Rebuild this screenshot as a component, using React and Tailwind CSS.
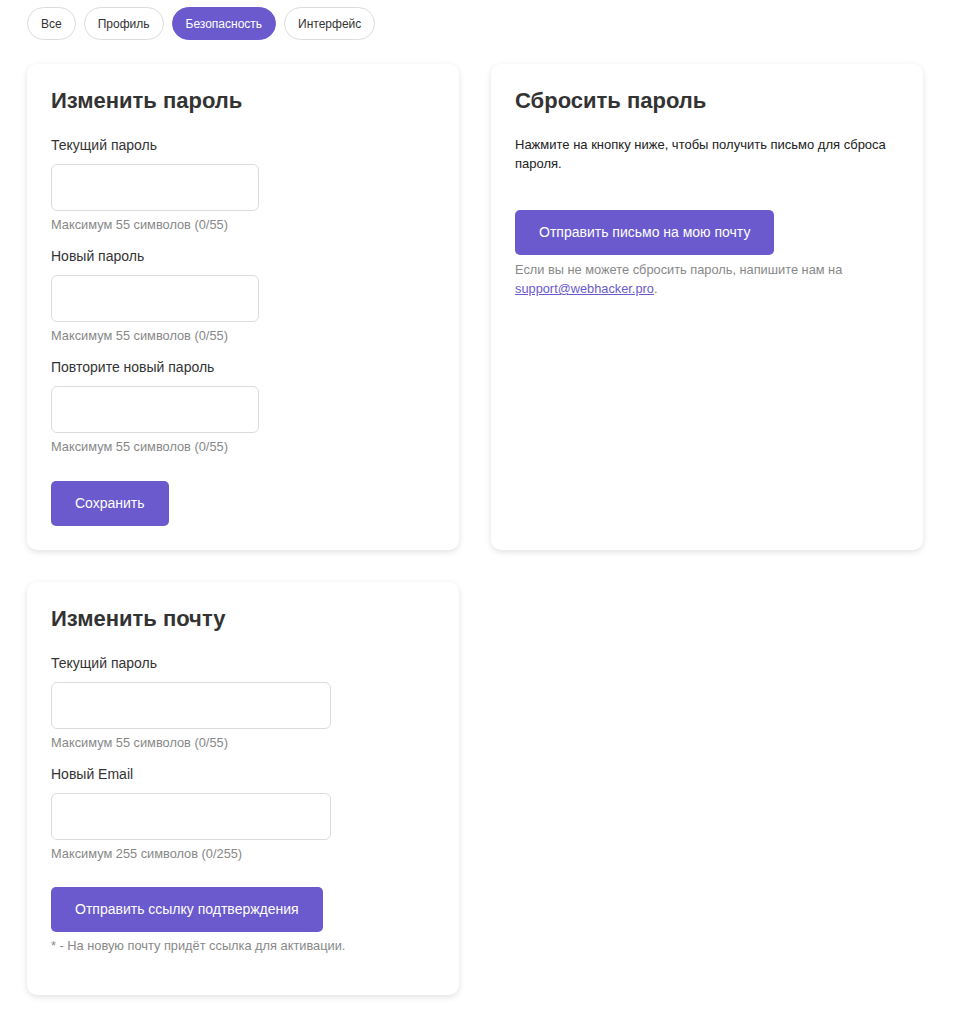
import React from "react";

const tabs = ["Все", "Профиль", "Безопасность", "Интерфейс"];

function Field({ label, hint, wide }) {
  return (
    <div className="mb-[12px]">
      <label className="block text-[14px] leading-[20px] text-[#333] mb-[9px]">{label}</label>
      <input
        type="text"
        className={`block h-[47px] rounded-[6px] border border-[#dcdcdc] bg-white outline-none ${wide ? "w-[280px]" : "w-[208px]"}`}
      />
      <p className="mt-[5px] text-[12.8px] leading-[18px] text-[#888]">{hint}</p>
    </div>
  );
}

function Card({ title, children }) {
  return (
    <div className="rounded-[10px] bg-white p-[24px] shadow-[0_2px_6px_rgba(0,0,0,0.12)]">
      <h2 className="mb-[21px] text-[22px] font-bold leading-[26px] text-[#333]">{title}</h2>
      {children}
    </div>
  );
}

export default function App() {
  return (
    <div className="min-h-screen bg-white px-[27px] pt-[7px] pb-[16px] font-['Liberation_Sans',Arial,sans-serif]">
      {/* Tabs */}
      <div className="flex gap-[8px]">
        {tabs.map((t) => (
          <button
            key={t}
            className={`h-[33px] rounded-full px-[13px] text-[12px] ${
              t === "Безопасность"
                ? "bg-[#6a5acd] text-white border border-[#6a5acd]"
                : "border border-[#dcdcdc] bg-white text-[#333]"
            }`}
          >
            {t}
          </button>
        ))}
      </div>

      <div className="mt-[24px] grid grid-cols-2 gap-[32px] w-[896px]">
        <Card title="Изменить пароль">
          <Field label="Текущий пароль" hint="Максимум 55 символов (0/55)" />
          <Field label="Новый пароль" hint="Максимум 55 символов (0/55)" />
          <Field label="Повторите новый пароль" hint="Максимум 55 символов (0/55)" />
          <button className="mt-[13px] h-[45px] rounded-[5px] bg-[#6a5acd] px-[24px] text-[14px] text-white">
            Сохранить
          </button>
        </Card>

        <Card title="Сбросить пароль">
          <p className="text-[13px] leading-[19px] text-[#222]">
            Нажмите на кнопку ниже, чтобы получить письмо для сброса пароля.
          </p>
          <button className="mt-[37px] h-[45px] rounded-[5px] bg-[#6a5acd] px-[24px] text-[14px] text-white">
            Отправить письмо на мою почту
          </button>
          <p className="mt-[5px] text-[12.8px] leading-[19px] text-[#888]">
            Если вы не можете сбросить пароль, напишите нам на{" "}
            <a href="#" className="text-[#6a5acd] underline">support@webhacker.pro</a>.
          </p>
        </Card>

        <Card title="Изменить почту">
          <Field wide label="Текущий пароль" hint="Максимум 55 символов (0/55)" />
          <Field wide label="Новый Email" hint="Максимум 255 символов (0/255)" />
          <button className="mt-[12px] h-[45px] rounded-[5px] bg-[#6a5acd] px-[24px] text-[14px] text-white">
            Отправить ссылку подтверждения
          </button>
          <p className="mt-[5px] mb-[16px] text-[12.8px] leading-[18px] text-[#888]">
            * - На новую почту придёт ссылка для активации.
          </p>
        </Card>
      </div>
    </div>
  );
}
